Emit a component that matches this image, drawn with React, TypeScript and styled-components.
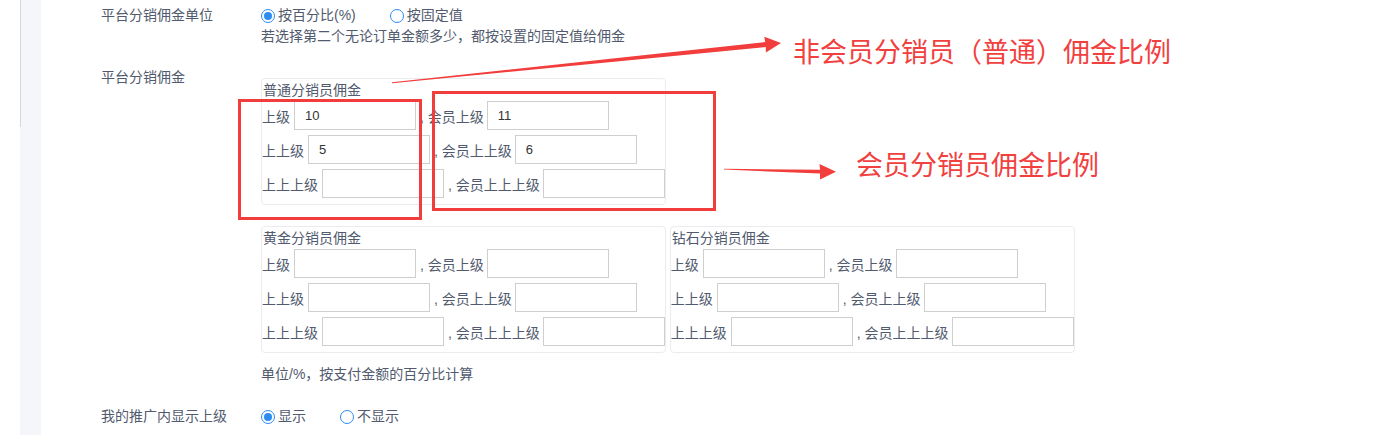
import React from "react";
import styled, { createGlobalStyle } from "styled-components";

const GlobalStyle = createGlobalStyle`
  body {
    margin: 0;
    background: #fff;
    font-family: "Liberation Sans", "Noto Sans CJK SC", sans-serif;
    font-size: 14px;
    color: #515a6e;
  }
`;

const Page = styled.div`
  position: relative;
  display: flex;
  width: 1375px;
  height: 435px;
  overflow: hidden;
`;

const Gutter = styled.div`
  width: 20px;
  flex-shrink: 0;
`;

const Rail = styled.div`
  width: 21px;
  flex-shrink: 0;
  display: flex;
  background: #f5f6fa;
`;

const RailLine = styled.div`
  width: 1px;
  height: 127px;
  background: #d5d8e0;
`;

const Main = styled.div`
  flex: 1;
  padding: 5px 0 0 60px;
`;

const FormRow = styled.div<{ $gap?: number }>`
  display: grid;
  grid-template-columns: 160px 1fr;
  margin-top: ${({ $gap }) => $gap ?? 0}px;
`;

const RowLabel = styled.div`
  line-height: 21px;
`;

const Field = styled.div<{ $pad?: number }>`
  padding-top: ${({ $pad }) => $pad ?? 0}px;
`;

const RadioGroup = styled.div`
  display: flex;
  align-items: center;
  height: 21px;
`;

const RadioItem = styled.label`
  display: flex;
  align-items: center;
  margin-right: 34px;
  line-height: 21px;
`;

const RadioDot = styled.span<{ $checked?: boolean }>`
  box-sizing: border-box;
  width: 14px;
  height: 14px;
  margin-right: 3px;
  border-radius: 50%;
  border: 1.5px solid #2d8cf0;
  display: flex;
  align-items: center;
  justify-content: center;
  &::after {
    content: "";
    width: 8px;
    height: 8px;
    border-radius: 50%;
    background: ${({ $checked }) => ($checked ? "#2d8cf0" : "transparent")};
  }
`;

const Hint = styled.div<{ $gap?: number }>`
  line-height: 21px;
  margin-top: ${({ $gap }) => $gap ?? 0}px;
`;

const BoxLine = styled.div<{ $gap?: number }>`
  display: flex;
  gap: 4px;
  margin-top: ${({ $gap }) => $gap ?? 0}px;
`;

const Box = styled.div`
  border: 1px solid #eaecef;
  border-radius: 4px;
  padding-bottom: 6px;
`;

const BoxTitle = styled.div`
  line-height: 22px;
  padding-left: 1px;
`;

const LevelRow = styled.div`
  display: flex;
  align-items: center;
  height: 29px;
  margin-top: 5px;
  ${BoxTitle} + & {
    margin-top: 0;
  }
`;

const LevelLabel = styled.span`
  white-space: nowrap;
`;

const Sep = styled.span`
  margin: 0 3px 0 4px;
  white-space: nowrap;
`;

const RateInput = styled.input`
  box-sizing: border-box;
  width: 122px;
  height: 29px;
  margin: 0 0 0 4px;
  padding: 0 10px;
  border: 1px solid #cfcfcf;
  border-radius: 0;
  font-family: "Liberation Sans", sans-serif;
  font-size: 13px;
  color: #333;
  outline: none;
  ${Sep} + & {
    margin-left: 0;
  }
`;

const Frame = styled.div<{ $x: number; $y: number; $w: number; $h: number }>`
  position: absolute;
  box-sizing: border-box;
  left: ${({ $x }) => $x}px;
  top: ${({ $y }) => $y}px;
  width: ${({ $w }) => $w}px;
  height: ${({ $h }) => $h}px;
  border: 3px solid #f23d3d;
  pointer-events: none;
`;

const Note = styled.div<{ $x: number; $y: number }>`
  position: absolute;
  left: ${({ $x }) => $x}px;
  top: ${({ $y }) => $y}px;
  font-family: "Noto Sans CJK SC", sans-serif;
  font-size: 27px;
  line-height: 27px;
  color: #f2403f;
  white-space: nowrap;
`;

const Arrows = styled.svg`
  position: absolute;
  left: 0;
  top: 0;
  pointer-events: none;
`;

type Level = { label: string; member: string; value?: string; memberValue?: string };

const levels = (vals: string[] = []): Level[] => [
  { label: "上级", member: "会员上级", value: vals[0], memberValue: vals[1] },
  { label: "上上级", member: "会员上上级", value: vals[2], memberValue: vals[3] },
  { label: "上上上级", member: "会员上上上级", value: vals[4], memberValue: vals[5] },
];

const CommissionBox = ({ title, rows }: { title: string; rows: Level[] }) => (
  <Box>
    <BoxTitle>{title}</BoxTitle>
    {rows.map((r) => (
      <LevelRow key={r.label}>
        <LevelLabel>{r.label}</LevelLabel>
        <RateInput defaultValue={r.value ?? ""} />
        <Sep>, {r.member}</Sep>
        <RateInput defaultValue={r.memberValue ?? ""} />
      </LevelRow>
    ))}
  </Box>
);

const Radio = ({ checked, children }: { checked?: boolean; children: React.ReactNode }) => (
  <RadioItem>
    <RadioDot $checked={checked} />
    {children}
  </RadioItem>
);

export default function App() {
  return (
    <>
      <GlobalStyle />
      <Page>
        <Gutter />
        <Rail>
          <RailLine />
        </Rail>
        <Main>
          <FormRow>
            <RowLabel>平台分销佣金单位</RowLabel>
            <Field>
              <RadioGroup>
                <Radio checked>按百分比(%)</Radio>
                <Radio>按固定值</Radio>
              </RadioGroup>
              <Hint>若选择第二个无论订单金额多少，都按设置的固定值给佣金</Hint>
            </Field>
          </FormRow>

          <FormRow $gap={20}>
            <RowLabel>平台分销佣金</RowLabel>
            <Field $pad={11}>
              <BoxLine>
                <CommissionBox title="普通分销员佣金" rows={levels(["10", "11", "5", "6"])} />
              </BoxLine>
              <BoxLine $gap={21}>
                <CommissionBox title="黄金分销员佣金" rows={levels()} />
                <CommissionBox title="钻石分销员佣金" rows={levels()} />
              </BoxLine>
              <Hint $gap={11}>单位/%，按支付金额的百分比计算</Hint>
            </Field>
          </FormRow>

          <FormRow $gap={21}>
            <RowLabel>我的推广内显示上级</RowLabel>
            <Field>
              <RadioGroup>
                <Radio checked>显示</Radio>
                <Radio>不显示</Radio>
              </RadioGroup>
            </Field>
          </FormRow>
        </Main>

        <Frame $x={238} $y={99} $w={184} $h={121} />
        <Frame $x={432} $y={91} $w={284} $h={120} />
        <Arrows width="1375" height="435" viewBox="0 0 1375 435">
          <polygon
            fill="#f23d3d"
            points="392,82.2 765.2,42.1 764.3,36.7 781,43 765.9,52.6 765.8,47.1 392,83.2"
          />
          <polygon
            fill="#f23d3d"
            points="724,168.8 820,169.8 819.5,164 836,171.8 820,179.5 820,173.6 724,169.6"
          />
        </Arrows>
        <Note $x={793} $y={37}>非会员分销员（普通）佣金比例</Note>
        <Note $x={856} $y={150}>会员分销员佣金比例</Note>
      </Page>
    </>
  );
}
